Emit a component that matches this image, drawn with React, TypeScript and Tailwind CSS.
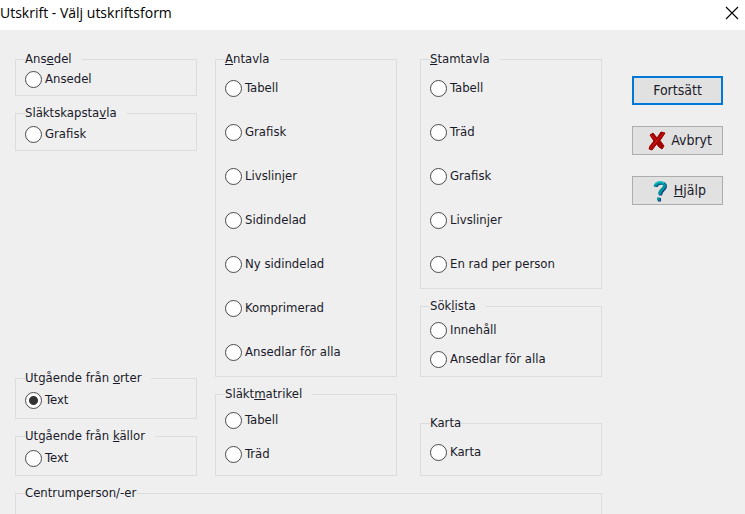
import { ReactNode } from "react";

interface GroupProps {
  title: ReactNode;
  className?: string;
  tight?: boolean;
  children?: ReactNode;
}

const Group: React.FC<GroupProps> = ({ title, className = "", tight, children }) => {
  return (
    <fieldset
      className={"min-w-0 border border-[#dcdcdc] pl-[9px] pr-2 flex flex-col " + className}
    >
      <legend className={"h-[18px] leading-[18px] " + (tight ? "" : "pr-[10px]")}>
        {title}
      </legend>
      {children}
    </fieldset>
  );
};

interface OptionProps {
  value: string;
  label: string;
  checked?: boolean;
}

const Option: React.FC<OptionProps> = ({ value, label, checked }) => {
  return (
    <label className="flex h-[22px] items-center gap-[3px] whitespace-nowrap leading-[22px]">
      <input
        type="radio"
        name="utskrift"
        value={value}
        defaultChecked={checked}
        className="h-[17px] w-[17px] shrink-0 appearance-none rounded-full border border-[#4a4a4a] bg-white checked:bg-[radial-gradient(circle,#333_0_4px,#fff_5px)]"
      />
      {label}
    </label>
  );
};

const antavla = [
  "Tabell",
  "Grafisk",
  "Livslinjer",
  "Sidindelad",
  "Ny sidindelad",
  "Komprimerad",
  "Ansedlar för alla",
];

const stamtavla = ["Tabell", "Träd", "Grafisk", "Livslinjer", "En rad per person"];

const App = () => {
  return (
    <div className="flex h-screen flex-col overflow-hidden bg-[#efefef] font-['DejaVu_Sans_Condensed','DejaVu_Sans',sans-serif] text-[13px] text-[#1a1a2a]">
      <header className="flex h-[30px] shrink-0 items-center justify-between bg-white pr-[6px] pb-1 text-black">
        <h1 className="font-['Open_Sans',sans-serif] text-[14px] leading-[26px]">
          Utskrift - Välj utskriftsform
        </h1>
        <button type="button" aria-label="Stäng" className="h-[14px] w-[14px]">
          <svg viewBox="0 0 14 14" className="h-[14px] w-[14px]">
            <path d="M1 1 13 13M13 1 1 13" stroke="#000" strokeWidth="1.1" fill="none" />
          </svg>
        </button>
      </header>

      <main className="flex gap-[30px] pl-[15px] pr-[22px] pt-5">
        <div className="flex min-w-0 flex-1 flex-col gap-2">
          <div className="flex">
            <div className="flex flex-1 flex-col gap-2">
              <Group title={<>Ans<u>e</u>del</>} className="pb-[5px]">
                <Option value="ansedel" label="Ansedel" />
              </Group>
              <Group title={<>Släktskapsta<u>v</u>la</>} className="pt-[1px] pb-[5px]">
                <Option value="slaktskap" label="Grafisk" />
              </Group>
              <Group title={<>Utgående från <u>o</u>rter</>} className="mt-auto pt-[2px] pb-[7px]">
                <Option value="orter" label="Text" checked />
              </Group>
              <Group title={<>Utgående från <u>k</u>ällor</>} className="pt-[2px] pb-[6px]">
                <Option value="kallor" label="Text" />
              </Group>
            </div>

            <div className="ml-[18px] flex flex-1 flex-col gap-2">
              <Group title={<><u>A</u>ntavla</>} className="gap-[22px] pt-[9px] pb-[13px]">
                {antavla.map((label) => (
                  <Option key={label} value={"antavla-" + label} label={label} />
                ))}
              </Group>
              <Group title={<>Släkt<u>m</u>atrikel</>} className="mt-auto gap-[12px] pt-[6px] pb-[10px]">
                <Option value="matrikel-tabell" label="Tabell" />
                <Option value="matrikel-trad" label="Träd" />
              </Group>
            </div>

            <div className="ml-[23px] flex flex-1 flex-col gap-2">
              <Group title={<><u>S</u>tamtavla</>} className="gap-[22px] pt-[9px] pb-[13px]">
                {stamtavla.map((label) => (
                  <Option key={label} value={"stamtavla-" + label} label={label} />
                ))}
              </Group>
              <Group title={<>Sök<u>l</u>ista</>} className="gap-[7px] pt-[4px] pb-[6px]">
                <Option value="sok-innehall" label="Innehåll" />
                <Option value="sok-ansedlar" label="Ansedlar för alla" />
              </Group>
              <Group title="Karta" tight className="mt-auto pt-[9px] pb-[12px]">
                <Option value="karta" label="Karta" />
              </Group>
            </div>
          </div>
          <Group title="Centrumperson/-er" tight className="pb-[60px]" />
        </div>

        <div className="flex w-[91px] shrink-0 flex-col gap-[21px] pt-[26px] text-[14px]">
          <button
            type="button"
            className="h-[29px] border-2 border-[#0078d7] bg-[#e1e1e1]"
          >
            Fortsätt
          </button>
          <button
            type="button"
            className="flex h-[29px] items-center justify-end gap-[5px] border border-[#adadad] bg-[#e1e1e1] pr-[10px]"
          >
            <svg viewBox="0 0 18 20" className="h-[20px] w-[18px]">
              <path
                d="M2 4 5 2 9 7 13 1 17 2 12 9.500 16 15 14 18 11 16 8.500 13 4 19 1 18 2 15 6 10Z"
                fill="#a00000"
                stroke="#a00000"
                strokeLinejoin="round"
              />
              <path d="M3 4 9 10M16 2 9 9.500 2 18" stroke="#d81818" fill="none" />
            </svg>
            Avbryt
          </button>
          <button
            type="button"
            className="flex h-[29px] items-center justify-end gap-[6px] border border-[#adadad] bg-[#e1e1e1] pr-[16px]"
          >
            <svg viewBox="0 0 16 22" className="h-[22px] w-[16px]">
              <g fill="none" strokeWidth="3">
                <path d="M4 7C5 2 14 2 13.500 6.500 13 10 8.500 10 8.500 15.500M7.500 18v3.500" stroke="#103c80" />
                <path d="M3 6.500C4 1.500 13 1.500 12.500 6 12 9.500 7.500 9 7.500 14.500M6.500 17.500v3" stroke="#00949c" />
                <path d="M3 4.500C5 1 10 1 12 3.500" stroke="#20dce0" strokeWidth="1" />
              </g>
            </svg>
            <span><u>H</u>jälp</span>
          </button>
        </div>
      </main>
    </div>
  );
};

export default App;
